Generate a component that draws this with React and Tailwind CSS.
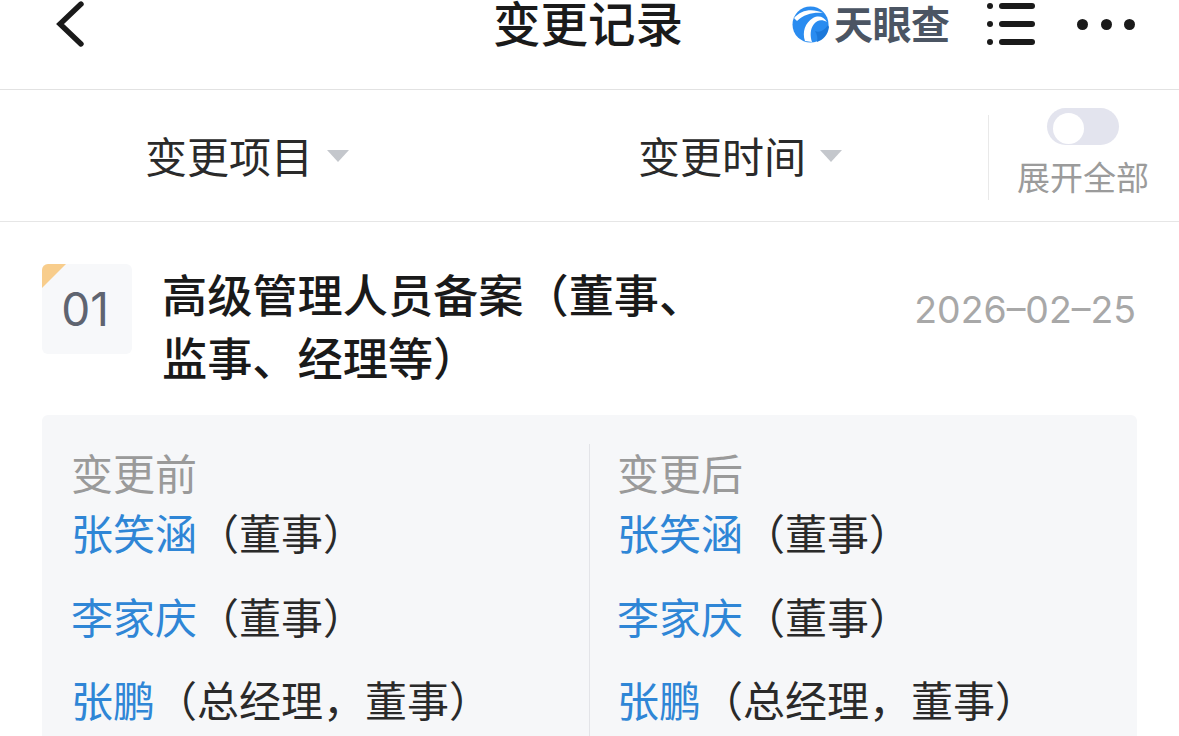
import React from 'react'

const cjk = "font-['Noto_Sans_CJK_SC','Noto_Sans',sans-serif]"

function Caret() {
  return <span className="ml-[14px] mt-[2px] w-0 h-0 border-x-[11px] border-x-transparent border-t-[12px] border-t-[#c4c7cc]" />
}

function Logo() {
  return (
    <div className="flex items-center w-[160px]">
      <svg width="37" height="37" viewBox="0 0 37 37" className="shrink-0">
        <circle cx="18.5" cy="18.5" r="18" fill="#2a8cf0" />
        <path d="M2 12 C9 4 20 2 31 7 C22 6 12 8 5 15 Z" fill="#fff" />
        <path d="M13 35 C10 26 13 17 21 12 C27 9 32 11 35 16 C30 13 25 14 22 18 C18 23 18 30 20 36 Z" fill="#fff" />
        <path d="M23 25 C27 27 32 25 36 19 L37 21 C36 29 31 34 25 36 C26 32 25 28 23 25 Z" fill="#1b78da" />
      </svg>
      <span className="ml-[5px] mt-[-5px] text-[39px] leading-[37px] font-bold tracking-[-0.5px] text-[#4b5563] whitespace-nowrap">天眼查</span>
    </div>
  )
}

function MenuIcon() {
  return (
    <div className="flex flex-col gap-[12px] w-[48px]">
      {[0, 1, 2].map((i) => (
        <div key={i} className="flex items-center gap-[6px]">
          <span className="w-[6px] h-[6px] rounded-full bg-[#1a1a1a]" />
          <span className="w-[36px] h-[6px] rounded-full bg-[#1a1a1a]" />
        </div>
      ))}
    </div>
  )
}

function Row({ name, role }) {
  return (
    <div className="h-[83.5px] leading-[60px] text-[42px] whitespace-nowrap">
      <span className="text-[#2f86d6]">{name}</span>
      <span className="text-[#2a2a2a]">（{role}）</span>
    </div>
  )
}

function Column({ title, className }) {
  return (
    <div className={className}>
      <div className="h-[58px] text-[42px] leading-[56px] text-[#9a9a9a]">{title}</div>
      <Row name="张笑涵" role="董事" />
      <Row name="李家庆" role="董事" />
      <Row name="张鹏" role="总经理，董事" />
    </div>
  )
}

export default function App() {
  return (
    <div className={`h-[736px] overflow-hidden bg-white ${cjk}`}>
      {/* header */}
      <div className="h-[90px] border-b border-[#e2e2e2] flex items-start">
        <svg width="30" height="48" viewBox="0 0 30 48" className="ml-[55px] shrink-0">
          <path d="M26 4 L5 24 L26 44" fill="none" stroke="#1a1a1a" strokeWidth="5.4" strokeLinecap="round" strokeLinejoin="miter" />
        </svg>
        <div className="ml-[408px] w-[299px] text-[47.5px] leading-[43px] font-medium text-[#1a1a1a] whitespace-nowrap">变更记录</div>
        <div className="mt-[6px]"><Logo /></div>
        <div className="ml-[35px] mt-[3px]"><MenuIcon /></div>
        <div className="ml-[42px] mt-[19px] flex gap-[12.5px]">
          <span className="w-[11px] h-[11px] rounded-full bg-[#1a1a1a]" />
          <span className="w-[11px] h-[11px] rounded-full bg-[#1a1a1a]" />
          <span className="w-[11px] h-[11px] rounded-full bg-[#1a1a1a]" />
        </div>
      </div>

      {/* filters */}
      <div className="h-[132px] border-b border-[#e6e6e6] flex items-center">
        <div className="w-[638px] pl-[145px] flex items-center text-[42px] leading-[60px] mt-[-2px] text-[#2a2a2a]">
          变更项目<Caret />
        </div>
        <div className="w-[350px] flex items-center text-[42px] leading-[60px] mt-[-2px] text-[#2a2a2a] whitespace-nowrap">
          变更时间<Caret />
        </div>
        <div className="mt-[4px] h-[85px] border-l border-[#e9e9e9] pl-[28px] flex flex-col items-start">
          <div className="ml-[30px] mt-[-7px] w-[72px] h-[42px] rounded-full bg-[#e3e4ee] relative">
            <span className="absolute left-[6px] top-[5px] w-[31px] h-[31px] rounded-full bg-white" />
          </div>
          <div className="mt-[7px] text-[33px] leading-[48px] text-[#9b9b9b] whitespace-nowrap">展开全部</div>
        </div>
      </div>

      {/* record */}
      <div className="px-[42px]">
        <div className="flex pt-[42px]">
          <div className="relative overflow-hidden w-[90px] h-[90px] rounded-[6px] bg-[#f7f8fa] flex items-center justify-center">
            <span className="absolute left-0 top-0 w-0 h-0 border-t-[24px] border-r-[24px] border-t-[#f8cd8c] border-r-transparent" />
            <span className="ml-[-4px] font-['Inter',sans-serif] text-[46px] text-[#5f6470]">01</span>
          </div>
          <div className="ml-[30px] w-[550px] text-[45.2px] leading-[63px] font-medium text-[#1a1a1a] mt-[-2px]">
            高级管理人员备案（董事、监事、经理等）
          </div>
          <div className="ml-auto mr-[1px] mt-[16px] font-['Inter',sans-serif] text-[37.4px] leading-[60px] text-[#a8a8a8] whitespace-nowrap">
            2026–02–25
          </div>
        </div>

        <div className="mt-[27px] h-[400px] rounded-[6px] bg-[#f6f7f9] flex pt-[29px]">
          <Column title="变更前" className="w-[548px] pl-[29px] border-r border-[#e3e4e8]" />
          <Column title="变更后" className="pl-[27px]" />
        </div>
      </div>
    </div>
  )
}
